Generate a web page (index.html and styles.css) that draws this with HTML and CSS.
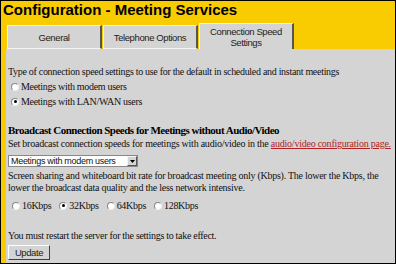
FILE: index.html
```html
<!DOCTYPE html>
<html>
<head>
<meta charset="utf-8">
<link rel="stylesheet" href="styles.css">
</head>
<body>
<div class="frame">
  <div class="title">Configuration - Meeting Services</div>
  <div class="tabs">
    <div class="tab">General</div>
    <div class="tab">Telephone Options</div>
    <div class="tab active">Connection Speed<br>Settings</div>
  </div>
  <div class="panel">
    <div class="line">Type of connection speed settings to use for the default in scheduled and instant meetings</div>
    <label class="opt first"><input type="radio" name="cs" class="radio"> Meetings with modem users</label>
    <label class="opt"><input type="radio" name="cs" class="radio" checked> Meetings with LAN/WAN users</label>
    <div class="heading">Broadcast Connection Speeds for Meetings without Audio/Video</div>
    <div class="line set">Set broadcast connection speeds for meetings with audio/video in the <a class="link" href="#">audio/video configuration page.</a></div>
    <div class="select"><span class="select-text">Meetings with modem users</span><span class="select-btn"><svg width="5" height="3" viewBox="0 0 5 3"><path d="M0 0h5L2.5 3z" fill="#000"/></svg></span></div>
    <div class="para">Screen sharing and whiteboard bit rate for broadcast meeting only (Kbps). The lower the Kbps, the lower the broadcast data quality and the less network intensive.</div>
    <div class="speeds">
      <label class="sp"><input type="radio" name="bk" class="radio"> 16Kbps</label>
      <label class="sp"><input type="radio" name="bk" class="radio" checked> 32Kbps</label>
      <label class="sp"><input type="radio" name="bk" class="radio"> 64Kbps</label>
      <label class="sp"><input type="radio" name="bk" class="radio"> 128Kbps</label>
    </div>
    <div class="line restart">You must restart the server for the settings to take effect.</div>
    <button class="btn">Update</button>
  </div>
</div>
</body>
</html>
```
FILE: styles.css
```css
html, body {
  margin: 0;
  padding: 0;
}
body {
  width: 396px;
  height: 264px;
  overflow: hidden;
}
.frame {
  box-sizing: border-box;
  width: 396px;
  height: 264px;
  border: 1px solid #000;
  background: #f8cc00;
  display: flex;
  flex-direction: column;
}
.title {
  font-family: "Liberation Sans", Arial, sans-serif;
  font-weight: bold;
  font-size: 15px;
  line-height: 18px;
  height: 22px;
  padding-left: 2px;
  color: #000;
}
.tabs {
  display: flex;
  align-items: flex-end;
  gap: 1px;
  margin-left: 6px;
  height: 26px;
}
.tab {
  box-sizing: border-box;
  width: 95px;
  height: 24px;
  background: #d4d4d4;
  border-top: 1px solid #f4f4f4;
  border-left: 1px solid #f4f4f4;
  border-right: 2px solid #555;
  border-bottom: 1px solid #f4f4f4;
  font-family: "Liberation Sans", Arial, sans-serif;
  font-size: 9.5px;
  letter-spacing: -0.4px;
  line-height: 11px;
  color: #222;
  display: flex;
  align-items: center;
  justify-content: center;
  text-align: center;
}
.tab.active {
  height: 26px;
  border-bottom: none;
  padding-top: 1px;
}
.panel {
  flex: 1;
  margin-left: 5px;
  background: #d4d4d4;
  padding: 17px 2px 0 2px;
  font-family: "Liberation Serif", "Times New Roman", serif;
  font-size: 10px;
  letter-spacing: -0.3px;
  line-height: 12px;
  color: #111;
}
.line {
  white-space: nowrap;
}
.opt {
  display: flex;
  align-items: center;
  height: 15px;
  line-height: 15px;
  padding-left: 3px;
}
.opt.first {
  margin-top: 1px;
}
.radio {
  appearance: none;
  -webkit-appearance: none;
  box-sizing: border-box;
  width: 8px;
  height: 8px;
  margin: 0 2px 0 0;
  border-radius: 50%;
  background: #fff;
  border: 1px solid #888;
  border-right-color: #eee;
  border-bottom-color: #eee;
  position: relative;
  flex: none;
}
.radio:checked::after {
  content: "";
  position: absolute;
  left: 1.5px;
  top: 1.5px;
  width: 3px;
  height: 3px;
  border-radius: 50%;
  background: #000;
}
.heading {
  margin-top: 14px;
  font-weight: bold;
  font-size: 11px;
  letter-spacing: -0.5px;
  line-height: 14px;
  color: #000;
}
.set {
  margin-top: 1px;
  letter-spacing: -0.24px;
}
.link {
  color: #b22222;
  text-decoration: underline;
}
.select {
  margin-top: 5px;
  box-sizing: border-box;
  width: 130px;
  height: 12px;
  background: #fff;
  border: 1px solid #888;
  display: flex;
  align-items: center;
  font-family: "Liberation Sans", Arial, sans-serif;
  font-size: 9px;
  letter-spacing: -0.3px;
  line-height: 10px;
  white-space: nowrap;
}
.select-text {
  flex: 1;
  padding-left: 2px;
}
.select-btn {
  box-sizing: border-box;
  width: 10px;
  height: 10px;
  background: #d4d4d4;
  border: 1px solid;
  border-color: #f4f4f4 #555 #555 #f4f4f4;
  display: flex;
  align-items: center;
  justify-content: center;
}
.para {
  margin-top: 3px;
  letter-spacing: -0.26px;
}
.speeds {
  margin-top: 4px;
  display: flex;
  gap: 8px;
  height: 15px;
  line-height: 15px;
  padding-left: 4px;
}
.sp {
  display: flex;
  align-items: center;
}
.restart {
  margin-top: 17px;
}
.btn {
  display: block;
  margin-top: 3px;
  box-sizing: border-box;
  width: 42px;
  height: 15px;
  padding: 0;
  background: #d4d4d4;
  border: 1px solid;
  border-color: #fff #404040 #404040 #fff;
  font-family: "Liberation Sans", Arial, sans-serif;
  font-size: 9.5px;
  letter-spacing: -0.4px;
  color: #222;
}
```
